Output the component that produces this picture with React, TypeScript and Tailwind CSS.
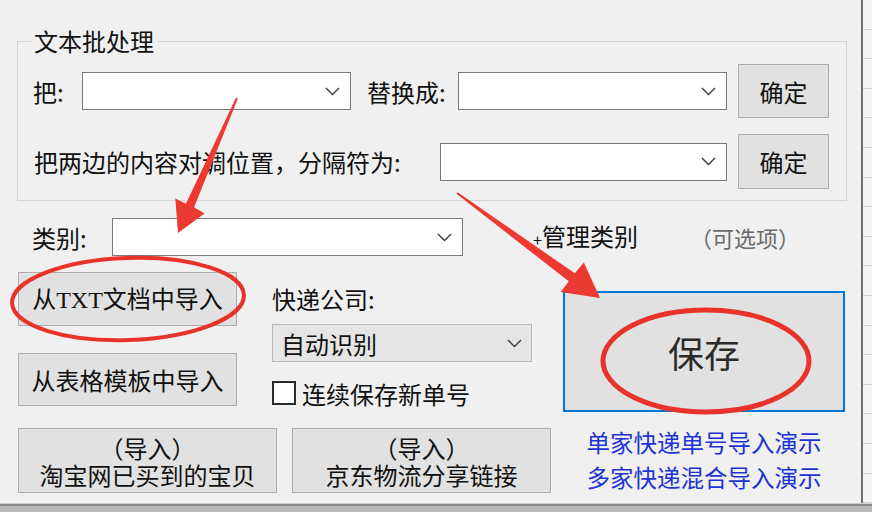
import React from "react";

const Chevron = () => (
  <svg width="15" height="9" viewBox="0 0 15 9" className="shrink-0">
    <path d="M1 1 L7.5 7.5 L14 1" fill="none" stroke="#3a3a3a" strokeWidth="1.4" />
  </svg>
);

const Combo = ({ className }: { className: string }) => (
  <div className={`h-[38px] border border-[#7a7a7a] bg-white flex items-center justify-end pr-[10px] ${className}`}>
    <Chevron />
  </div>
);

const Btn = ({ className, children }: { className: string; children: React.ReactNode }) => (
  <div
    className={`border border-[#adadad] bg-[#e1e1e1] flex flex-col items-center justify-center text-[24px] leading-[27px] text-[#111] ${className}`}
  >
    {children}
  </div>
);

export default function App() {
  const gridLines = Array.from({ length: 17 }, (_, i) => i);
  return (
    <div className="relative w-[872px] h-[512px] overflow-hidden bg-[#f0f0f0] font-['Noto_Sans_CJK_SC','Noto_Sans',sans-serif] text-[#111] flex flex-col">
      <div className="flex h-[503px]">
        {/* main window */}
        <div className="w-[861px] h-full pt-[28px] pl-[17px] bg-[#f0f0f0]">
          <fieldset className="w-[830px] h-[173px] border border-[#d6d6d6] pb-[11px]">
            <legend className="ml-[13px] px-[3px] text-[24px] leading-[26px]">文本批处理</legend>
            <div className="flex items-center h-[54px] mt-[10px] pl-[15px] text-[24px] leading-[27px]">
              <span className="w-[49px]">把:</span>
              <Combo className="w-[269px]" />
              <span className="w-[107px] pl-[16px]">替换成:</span>
              <Combo className="w-[269px]" />
              <Btn className="ml-[11px] w-[91px] h-[54px]">确定</Btn>
            </div>
            <div className="flex items-center h-[55px] mt-[16px] pl-[16px] text-[24px] leading-[27px]">
              <span className="w-[406px]">把两边的内容对调位置，分隔符为:</span>
              <Combo className="w-[287px]" />
              <Btn className="ml-[11px] w-[91px] h-[55px]">确定</Btn>
            </div>
          </fieldset>

          <div className="flex items-center h-[38px] mt-[17px] pl-[15px] text-[24px] leading-[27px]">
            <span className="w-[80px]">类别:</span>
            <Combo className="w-[351px]" />
            <span className="ml-[70px] w-[157px]">
              <span className="text-[16px]">+</span>管理类别
            </span>
            <span className="text-[22px] text-[#6a6a6a]">（可选项）</span>
          </div>

          <div className="flex mt-[16px] ml-[1px]">
            <div className="w-[533px] flex flex-col">
              <div className="flex">
                <div className="w-[219px] flex flex-col">
                  <Btn className="h-[54px]">
                    <span>
                      从<span className="font-['Liberation_Serif',serif]">TXT</span>文档中导入
                    </span>
                  </Btn>
                  <Btn className="h-[53px] mt-[27px]">从表格模板中导入</Btn>
                </div>
                <div className="ml-[35px] w-[260px] flex flex-col text-[24px] leading-[27px]">
                  <div className="h-[52px] flex items-center">快递公司:</div>
                  <div className="h-[38px] border border-[#b9b9b9] bg-[#e5e5e5] flex items-center justify-between pl-[8px] pr-[9px]">
                    <span>自动识别</span>
                    <Chevron />
                  </div>
                  <div className="mt-[19px] h-[24px] flex items-center">
                    <div className="w-[24px] h-[24px] border-[2px] border-[#2a2a2a] bg-white shrink-0" />
                    <span className="ml-[6px]">连续保存新单号</span>
                  </div>
                </div>
              </div>
              <div className="flex mt-[22px]">
                <Btn className="w-[259px] h-[65px]">
                  <div className="leading-[27px]">（导入）</div>
                  <div className="leading-[27px]">淘宝网已买到的宝贝</div>
                </Btn>
                <Btn className="ml-[15px] w-[259px] h-[65px]">
                  <div className="leading-[27px]">（导入）</div>
                  <div className="leading-[27px]">京东物流分享链接</div>
                </Btn>
              </div>
            </div>
            <div className="ml-[12px] w-[282px] flex flex-col items-center">
              <div className="mt-[19px] w-[282px] h-[121px] border-[2px] border-[#0078d7] bg-[#e1e1e1] flex items-center justify-center text-[36px] leading-[40px] text-[#2b2b2b]">
                保存
              </div>
              <div className="mt-[13px] text-[23.5px] leading-[35px] text-[#1c34d6] text-center">
                <div>单家快递单号导入演示</div>
                <div>多家快递混合导入演示</div>
              </div>
            </div>
          </div>
        </div>
        {/* window right edge */}
        <div className="w-[2px] h-full bg-[#6e6e6e]" />
        {/* spreadsheet behind */}
        <div className="flex-1 h-full bg-[#f4f4f4] flex flex-col">
          {gridLines.map((i) => (
            <div key={i} className="h-[30px] border-b border-[#d4d4d4]" />
          ))}
        </div>
      </div>
      <div className="h-[1px] bg-[#cfcfcf]" />
      <div className="h-[2px] bg-[#8a8a8a]" />
      <div className="flex-1 bg-[#b8b8b8]" />

      {/* annotation overlay */}
      <svg className="absolute left-0 top-0 pointer-events-none" width="872" height="512" viewBox="0 0 872 512">
        <polygon
          points="237.9,98.4 194.1,207.3 204.5,213.5 178,233 175.3,198.5 185.9,203.7 236.1,97.6"
          fill="#ec3a32"
        />
        <polygon
          points="456.4,193.8 568.8,281.3 560.7,292.0 600,298 583.9,262.6 574.8,273.3 457.6,192.2"
          fill="#ec3a32"
        />
        <ellipse cx="128" cy="299" rx="116" ry="41" fill="none" stroke="#e8332b" strokeWidth="4" transform="rotate(-2 128 299)" />
        <ellipse cx="706" cy="361" rx="103" ry="51" fill="none" stroke="#e8332b" strokeWidth="5" />
      </svg>
    </div>
  );
}
